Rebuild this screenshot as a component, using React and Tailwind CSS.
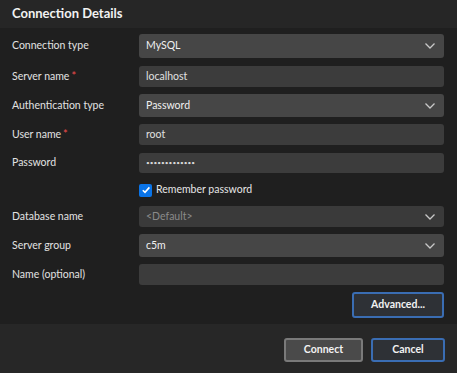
import React from "react";

const Chevron = () => (
  <svg width="12" height="8" viewBox="0 0 12 8" className="shrink-0">
    <path d="M1.5 1.5 L6 6 L10.5 1.5" fill="none" stroke="#c8c8c8" strokeWidth="1.3" />
  </svg>
);

const Label = ({ children, req }) => (
  <div className="w-[127px] shrink-0 text-[10.5px] text-[#e2e2e2] flex items-center">
    <span>{children}</span>
    {req && <span className="text-[#f14c4c] ml-[2px] text-[11px]">*</span>}
  </div>
);

const Select = ({ value, h, muted, bg }) => (
  <div
    className={`flex-1 flex items-center justify-between pl-[7px] pr-[8px] rounded-[3px] ${bg} ${h} ${
      muted ? "text-[#8a8a8a]" : "text-[#f0f0f0]"
    } text-[10.5px]`}
  >
    <span>{value}</span>
    <Chevron />
  </div>
);

const Input = ({ children, h = "h-[21px]" }) => (
  <div className={`flex-1 flex items-center pl-[7px] rounded-[3px] bg-[#3c3c3c] ${h} text-[10.5px] text-[#e0e0e0]`}>
    {children}
  </div>
);

export default function App() {
  return (
    <div
      className="w-[457px] h-[373px] bg-[#1f1f1f] flex flex-col overflow-hidden"
      style={{ fontFamily: 'Lato, "Noto Sans", sans-serif' }}
    >
      <div className="h-[28px] shrink-0 bg-[#262626] flex items-center px-[12px]">
        <span className="text-[13px] font-bold text-[#f2f2f2]">Connection Details</span>
      </div>
      <div className="flex-1 flex flex-col pl-[12px] pr-[13px] pt-[6px]">
        <div className="flex">
          <Label>Connection type</Label>
          <Select value="MySQL" h="h-[24px]" bg="bg-[#464646]" />
        </div>
        <div className="flex mt-[8px]">
          <Label req>Server name</Label>
          <Input>localhost</Input>
        </div>
        <div className="flex mt-[7px]">
          <Label>Authentication type</Label>
          <Select value="Password" h="h-[23px]" bg="bg-[#464646]" />
        </div>
        <div className="flex mt-[7px]">
          <Label req>User name</Label>
          <Input>root</Input>
        </div>
        <div className="flex mt-[8px]">
          <Label>Password</Label>
          <Input h="h-[20px]">
            <span className="text-[6.5px] text-[#d8d8d8]">•••••••••••••</span>
          </Input>
        </div>
        <div className="flex mt-[7px] h-[20px] items-center">
          <div className="w-[127px] shrink-0" />
          <div className="w-[13px] h-[13px] rounded-[2px] bg-[#0a74e8] flex items-center justify-center">
            <svg width="10" height="10" viewBox="0 0 10 10">
              <path d="M1.8 5.2 L4 7.4 L8.4 2.4" fill="none" stroke="#ffffff" strokeWidth="1.6" />
            </svg>
          </div>
          <span className="ml-[4px] text-[10.5px] text-[#e6e6e6]">Remember password</span>
        </div>
        <div className="flex mt-[6px]">
          <Label>Database name</Label>
          <Select value="<Default>" h="h-[21px]" muted bg="bg-[#3a3a3a]" />
        </div>
        <div className="flex mt-[7px]">
          <Label>Server group</Label>
          <Select value="c5m" h="h-[23px]" bg="bg-[#464646]" />
        </div>
        <div className="flex mt-[7px]">
          <Label>Name (optional)</Label>
          <Input />
        </div>
        <div className="flex justify-end mt-[7px]">
          <button className="w-[92px] h-[26px] rounded-[3px] border-2 border-[#3a6db3] bg-[#2e3136] text-[10.5px] font-bold text-[#f2f2f2]">
            Advanced...
          </button>
        </div>
      </div>
      <div className="h-[49px] shrink-0 bg-[#272727] flex justify-end items-start pt-[14px] pr-[12px] gap-[8px]">
        <button className="w-[79px] h-[24px] rounded-[3px] border-2 border-[#7a7a7a] bg-[#4a4a4a] text-[10.5px] font-bold text-[#f2f2f2]">
          Connect
        </button>
        <button className="w-[74px] h-[24px] rounded-[3px] border-2 border-[#3a6db3] bg-[#2e3136] text-[10.5px] font-bold text-[#f2f2f2]">
          Cancel
        </button>
      </div>
    </div>
  );
}
